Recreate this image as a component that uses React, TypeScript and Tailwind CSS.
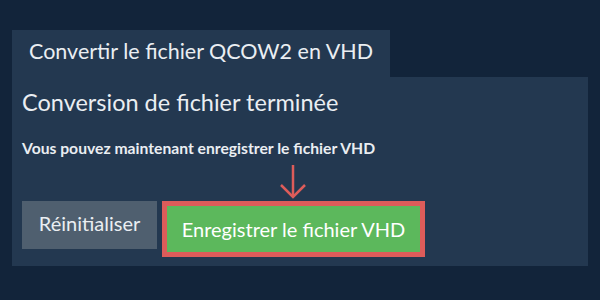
import React from "react";

export default function App() {
  return (
    <div
      className="w-[600px] h-[300px] bg-[#12243a] pt-[30px] px-[12px] text-white"
      style={{ fontFamily: "Lato, 'Open Sans', sans-serif" }}
    >
      <div className="flex">
        <div className="w-[378px] h-[47px] bg-[#233850] flex items-center justify-center text-[21.5px] text-[#eaeef2] pb-[5px]">
          Convertir le fichier QCOW2 en VHD
        </div>
      </div>
      <div className="w-[576px] h-[189px] bg-[#233850] px-[10px] pt-[10px]">
        <div className="text-[23.5px] leading-[30px] text-[#eaeef2]">Conversion de fichier terminée</div>
        <div className="mt-[21px] text-[15.7px] leading-[20px] font-bold text-[#eaeef2]">
          Vous pouvez maintenant enregistrer le fichier VHD
        </div>
        <div className="flex items-start gap-[5px] mt-[43px]">
          <div className="w-[135px] h-[48px] bg-[#4f5f6f] flex items-center justify-center text-[20px] text-[#eaeef2] pb-[4px]">
            Réinitialiser
          </div>
          <div className="relative w-[263px] h-[56px] border-[5px] border-[#dd5c5a] bg-[#5cb85c] flex items-center justify-center text-[20px] text-white">
            Enregistrer le fichier VHD
            <svg
              className="absolute left-[111px] top-[-43px]"
              width="30"
              height="38"
              viewBox="0 0 30 38"
              fill="none"
              stroke="#dd5c5a"
              strokeWidth="2.5"
            >
              <path d="M15 2 V34" />
              <path d="M3 22 L15 34 L27 22" />
            </svg>
          </div>
        </div>
      </div>
    </div>
  );
}
